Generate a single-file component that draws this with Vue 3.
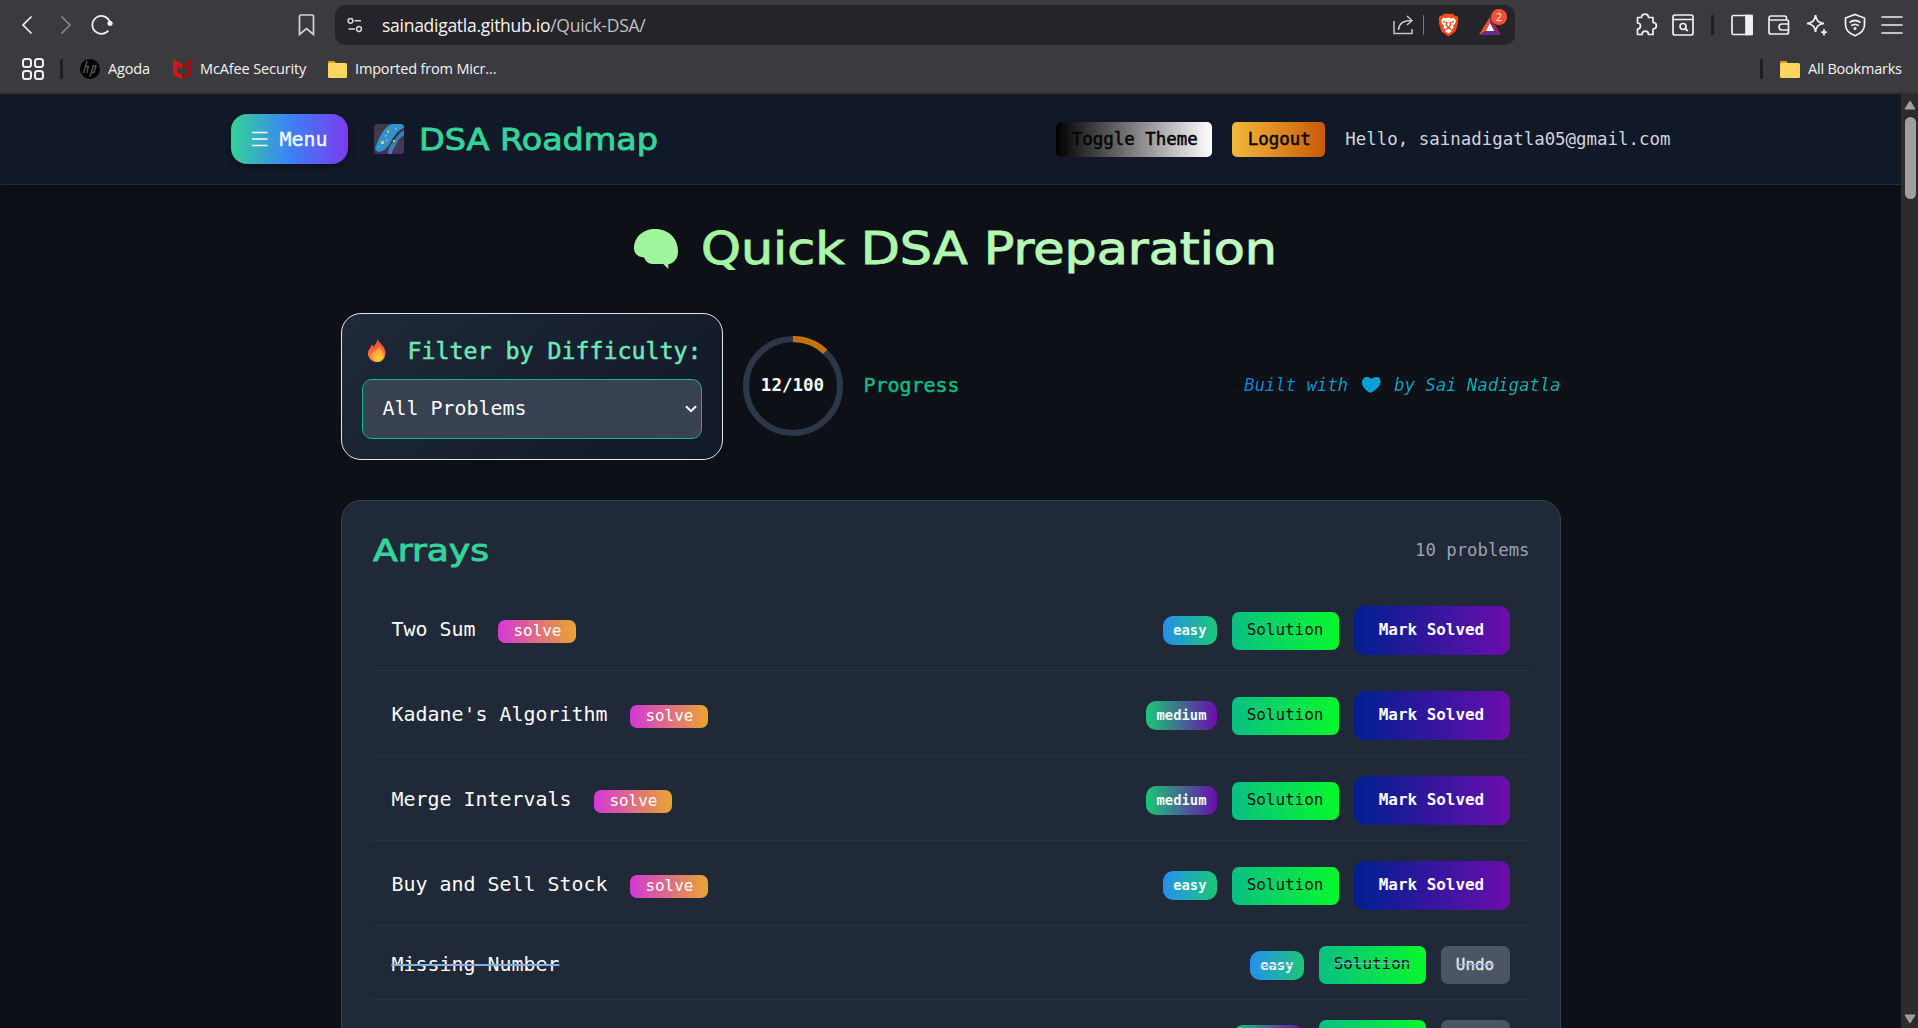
<script setup>
const problems = [
  { name: 'Two Sum', level: 'easy', solved: false },
  { name: "Kadane's Algorithm", level: 'medium', solved: false },
  { name: 'Merge Intervals', level: 'medium', solved: false },
  { name: 'Buy and Sell Stock', level: 'easy', solved: false },
  { name: 'Missing Number', level: 'easy', solved: true },
  { name: '', level: 'medium', solved: true },
]
const done = 12
const total = 100
</script>

<template>
  <div class="window">
    <div class="chrome">
      <div class="toolbar">
        <svg class="ic back" width="12" height="20" viewBox="0 0 12 20"><path d="M10.500 1.500 2 10l8.500 8.500" /></svg>
        <svg class="ic fwd" width="12" height="20" viewBox="0 0 12 20"><path d="M1.500 1.500 10 10l-8.500 8.500" /></svg>
        <svg class="ic reload" width="24" height="24" viewBox="0 0 24 24"><path d="M18.300 17.600A9 9 0 1 1 19 7.200c.8 1 1.200 1.800 1.400 2.800" /><circle cx="20" cy="10.300" r="2.600" fill="#f0f0f2" stroke="none" /></svg>
        <svg class="ic mark" width="17" height="22" viewBox="0 0 17 22"><path d="M1.500 2.500a1.500 1.500 0 0 1 1.500-1.500h11a1.500 1.500 0 0 1 1.500 1.500v18l-7-6-7 6z" /></svg>
        <div class="address">
          <svg class="ic tune" width="16" height="16" viewBox="0 0 16 16"><circle cx="3.500" cy="3.800" r="2.400" /><path d="M7.500 3.800H14M1.500 12h6.500" /><circle cx="12" cy="12" r="2.400" /></svg>
          <span class="url">sainadigatla.github.io<i>/Quick-DSA/</i></span>
          <svg class="ic share" width="21" height="20" viewBox="0 0 21 20"><path d="M1 6v12.500h18V14M5.500 15c.3-6 4-9.500 12.500-9.500M14 1l5 4.500-5 4.500" /></svg>
          <span class="bar"></span>
          <svg class="lion" width="21" height="24" viewBox="0 0 21 24">
            <path fill="#ff4a12" d="M6 .8h9l1.800 2 2.200-.1 1.500 3-.8 2 .4 2.500-2.600 8.300L10.500 23.500 3.500 18.500.9 10.200l.4-2.500-.8-2 1.500-3 2.200.1z" />
            <path fill="#fff" d="M5 4.800 8 5.200l2.500-.6 2.500.6 3-.4 2 3-.7 2.200-2.300 2.700.7 2.200-3 2.200 1.200 1.200-3.400 2.200-3.400-2.200 1.200-1.200-3-2.200.7-2.200-2.300-2.700L3 7.800z" />
            <path fill="none" stroke="#ff4a12" stroke-width="1.300" d="m5 8.500 4 1.200-.8 2.300 2.300 3 2.300-3-.8-2.300 4-1.200M8 16.200l2.500-1.200 2.500 1.200" />
          </svg>
          <span class="bat">
            <svg width="24" height="20" viewBox="0 0 24 20"><path fill="#ff5020" d="M12 1 .8 19l7-4L12 7z" /><path fill="#a01f63" d="m12 1 11.200 18-7-4L12 7z" /><path fill="#662d91" d="M.8 19h22.400l-7-4H7.800z" /><path fill="#fff" d="m12 7-4.200 8h8.400z" /></svg>
            <b>2</b>
          </span>
        </div>
        <div class="tools">
          <svg class="ic puzzle" width="24" height="24" viewBox="0 0 24 24"><path d="M3.500 4.500h4c0-4.500 7-4.500 7 0h4.500v5c4.500 0 4.500 6.500 0 6.500v5.500h-4.500c0-4.500-6.500-4.500-6.500 0H3.500V16c4 0 4-6 0-6z" stroke-linejoin="round" /></svg>
          <svg class="ic" width="22" height="22" viewBox="0 0 22 22"><rect x="1" y="1" width="20" height="20" rx="2" /><path d="M1 5.500h20M13 14.500l3 2.500" /><circle cx="11" cy="12.500" r="3" /></svg>
          <span class="bar dark"></span>
          <svg class="ic" width="22" height="22" viewBox="0 0 22 22"><rect x="1" y="1.500" width="20" height="19" rx="1.500" /><path d="M15 1.500h6v19h-6z" fill="#f0f0f2" /></svg>
          <svg class="ic" width="22" height="22" viewBox="0 0 22 22"><path d="M18.500 6.500V4a2 2 0 0 0-2-2H3a2 2 0 0 0-2 2v14a2 2 0 0 0 2 2h15.500a2 2 0 0 0 2-2V7.500a1.500 1.500 0 0 0-1.500-1.500H2M20.500 10H14a3 3 0 0 0 0 6h6.500" /></svg>
          <svg class="ic" width="24" height="24" viewBox="0 0 24 24"><path d="M10.500 2c.8 5.700 2.800 7.700 8.500 8.500-5.700.8-7.700 2.800-8.500 8.500-.8-5.700-2.800-7.700-8.500-8.500 5.700-.8 7.700-2.800 8.500-8.500z" /><path d="M19 16c.3 2.200 1 2.800 3 3.200-2 .4-2.700 1-3 3.200-.3-2.200-1-2.800-3-3.200 2-.4 2.700-1 3-3.200z" fill="#f0f0f2" stroke-width="1" /></svg>
          <svg class="ic" width="22" height="24" viewBox="0 0 22 24"><path d="M11 1.500 20.500 5v7c0 5-4 8.500-9.500 10.800C5.500 20.500 1.500 17 1.500 12V5z" /><path d="M5.500 9.700c3.500-2.800 7.500-2.800 11 0M7.300 12.700c2.500-1.900 4.900-1.900 7.400 0" /><circle cx="11" cy="15.500" r="1.500" fill="#f0f0f2" stroke="none" /></svg>
          <svg class="ic" width="22" height="20" viewBox="0 0 22 20"><path d="M.5 2h21M.5 10h21M.5 18h21" /></svg>
        </div>
      </div>
      <div class="bookmarks">
        <svg class="ic" width="22" height="22" viewBox="0 0 22 22"><rect x="1" y="1" width="8" height="8" rx="2.500" /><rect x="13" y="1" width="8" height="8" rx="2.500" /><rect x="1" y="13" width="8" height="8" rx="2.500" /><rect x="13" y="13" width="8" height="8" rx="2.500" /></svg>
        <span class="bar dark first"></span>
        <svg class="hp" width="20" height="20" viewBox="0 0 20 20"><circle cx="10" cy="10" r="10" fill="#000" /><path d="M7 2 3.500 14M5.500 7.500h3L6.700 14M13.500 6.500 9.700 18M12.500 7h3.500l-2 6.500h-2.500" fill="none" stroke="#55555a" stroke-width="1.300" /></svg>
        <span class="t t1">Agoda</span>
        <svg class="mc" width="18" height="20" viewBox="0 0 18 20"><path fill="#d01818" d="m0 0 9 5v4.500L4.500 7.300v6.500L9 15.700V20l-9-4z" /><path fill="#8e1515" d="m18 0-9 5v4.500l4.500-2.200v6.500L9 15.700V20l9-4z" /></svg>
        <span class="t t2">McAfee Security</span>
        <svg class="fd" width="20" height="17" viewBox="0 0 20 17"><path fill="#dba015" d="M0 1.500C0 .7.500 0 1.300 0h5l2 2.500H18V12H0z" /><rect y="2" width="19" height="15" rx="1.500" fill="#ffd75e" /></svg>
        <span class="t t3">Imported from Micr...</span>
        <span class="bar dark last"></span>
        <svg class="fd2" width="20" height="17" viewBox="0 0 20 17"><path fill="#dba015" d="M0 1.500C0 .7.500 0 1.300 0h5l2 2.500H18V12H0z" /><rect y="2" width="20" height="15" rx="1.500" fill="#ffd75e" /></svg>
        <span class="t t4">All Bookmarks</span>
      </div>
    </div>

    <div class="viewport">
      <div class="page">
        <header>
          <div class="header-inner">
            <button class="menu">
              <svg width="16" height="16" viewBox="0 0 16 16"><path d="M0 1.500h15.500M0 8h15.500M0 14.500h15.500" stroke="#fff" stroke-width="1.500" /></svg>
              <span>Menu</span>
            </button>
            <svg class="galaxy" width="30" height="30" viewBox="0 0 30 30">
              <defs>
                <clipPath id="sq"><rect width="30" height="30" rx="3.500" /></clipPath>
                <linearGradient id="sky" x1="0" y1="0" x2="0" y2="1"><stop offset="0" stop-color="#403840" /><stop offset=".75" stop-color="#433b4c" /><stop offset="1" stop-color="#502a70" /></linearGradient>
              </defs>
              <g clip-path="url(#sq)">
                <rect width="30" height="30" fill="url(#sky)" />
                <path fill="#3293cc" d="M17 0h13v4c-7 3-10 9-14 15-3 5-7 9-12 9L1 25c3-9 7-20 16-25z" />
                <path fill="#3482bb" d="M30 6v5c-5 3-6 6-8 10-2 3-4 5-4 9h-4c0-5 2-9 5-12 4-5 6-9 11-12z" />
                <path fill="none" stroke="#28394f" stroke-width="1.300" d="M30 4.500c-7 3-9 8-12 13" />
                <path fill="#f4c535" d="M13 6.500h2v2h-2zM7 17h3v3H7zM19 16h2v2h-2z" />
                <path fill="#68d6ee" d="M21 4h1.500v1.500H21zM11 11h1.500v1.500H11zM12 15.500h1.500V17H12zM4 22h1v1H4z" />
                <path fill="#39529a" d="M3 8.500h1.500V10H3zM6 3h1v1H6zM25 18h1v1h-1zM27 22h1v1h-1zM22 25h1v1h-1z" />
              </g>
            </svg>
            <svg class="brand" width="240" height="40"><text x="0" y="31" textLength="239" lengthAdjust="spacingAndGlyphs">DSA Roadmap</text></svg>
            <button class="toggle">Toggle Theme</button>
            <button class="logout">Logout</button>
            <span class="hello">Hello, sainadigatla05@gmail.com</span>
          </div>
        </header>

        <main>
          <svg class="headline" width="646" height="60" viewBox="0 0 646 60">
            <defs><linearGradient id="mint" gradientUnits="userSpaceOnUse" x1="0" y1="0" x2="642" y2="0"><stop offset="0" stop-color="#a0f49d" /><stop offset="1" stop-color="#c2fbc4" /></linearGradient></defs>
            <path fill="url(#mint)" d="M21 5C35 5 44 15 44 27c0 6-2 10-7 12.500l-2.700.7V45l-5-5H19c-4 0-7-2-9-6.500C4 33 0 29.500 0 24.500 0 13 9 5 21 5z" />
            <text x="67" y="40" textLength="576" lengthAdjust="spacingAndGlyphs" fill="url(#mint)">Quick DSA Preparation</text>
          </svg>

          <section class="controls">
            <div class="filter">
              <label>
                <svg width="18" height="23" viewBox="0 0 18 23">
                  <defs>
                    <linearGradient id="fl" x1="0" y1="0" x2="0" y2="1"><stop offset="0" stop-color="#f0453c" /><stop offset="1" stop-color="#ff8a3c" /></linearGradient>
                    <radialGradient id="fy" cx=".6" cy=".75" r=".6"><stop offset="0" stop-color="#ffd52e" /><stop offset="1" stop-color="#ff9640" /></radialGradient>
                  </defs>
                  <path fill="url(#fl)" d="M9.500 0c1.500 4 8 7 8 14 0 5-3.500 9-8.500 9S0 19 0 14.500C0 10 3 9.500 3.500 5.500c1 .5 1.500 1 2 2.200C7.500 5.500 9 3 9.500 0z" />
                  <path fill="url(#fy)" d="M11 7c1 3 4.800 5 4.800 9.500 0 4-2.800 6.500-6.300 6.500-4 0-6.300-2.800-6.300-6C3.200 12.500 9 12 11 7z" />
                </svg>
                <span>Filter by Difficulty:</span>
              </label>
              <div class="select">
                <span>All Problems</span>
                <svg width="12" height="8" viewBox="0 0 12 8"><path d="m1 1.200 5 5 5-5" fill="none" stroke="#fff" stroke-width="2" /></svg>
              </div>
            </div>
            <div class="ring">
              <svg width="100" height="100" viewBox="0 0 100 100">
                <circle cx="50" cy="50" r="47" pathLength="100" stroke="#2d3748" />
                <circle cx="50" cy="50" r="47" pathLength="100" stroke="#c67304" :stroke-dasharray="`${done} ${total - done}`" />
              </svg>
              <b>{{ done }}/{{ total }}</b>
            </div>
            <span class="progress">Progress</span>
            <div class="credit">
              <span class="c1">Built with</span>
              <svg width="19" height="16" viewBox="0 0 19 16"><path fill="#009fd4" d="M7.500 15.500C4 13.500 0 10 0 5.500 0 2 2.500 0 5 0c2 0 3.500 1 4.500 2C11 .7 12.500 0 14.500 0 17 0 18.600 1.500 18.600 4.500c0 5-6 9-8.600 10.700-.8.500-1.700.7-2.500.3z" /></svg>
              <span class="c2">by Sai Nadigatla</span>
            </div>
          </section>

          <section class="card">
            <div class="card-head">
              <svg class="topic" width="118" height="40"><text x="0" y="28" textLength="116" lengthAdjust="spacingAndGlyphs">Arrays</text></svg>
              <span>10 problems</span>
            </div>
            <div v-for="(p, i) in problems" :key="i" class="row" :class="{ solved: p.solved }">
              <span class="name">{{ p.name }}</span>
              <a v-if="!p.solved" class="solve">solve</a>
              <span class="level" :class="p.level">{{ p.level }}</span>
              <a class="solution">Solution</a>
              <button v-if="p.solved" class="undo">Undo</button>
              <button v-else class="mark-solved">Mark Solved</button>
            </div>
          </section>
        </main>
      </div>
      <div class="scrollbar">
        <svg width="12" height="10" viewBox="0 0 12 10"><path d="M6 1 11 9H1z" fill="#9f9f9f" stroke="#9f9f9f" stroke-linejoin="round" /></svg>
        <div class="thumb"></div>
        <svg class="down" width="12" height="10" viewBox="0 0 12 10"><path d="M6 9 11 1H1z" fill="#9f9f9f" stroke="#9f9f9f" stroke-linejoin="round" /></svg>
      </div>
    </div>
  </div>
</template>

<style>
body { margin: 0; background: #0d1117; overflow: hidden; }
</style>

<style scoped>
* { box-sizing: border-box; }
svg { display: block; flex: none; overflow: visible; }
button { border: 0; margin: 0; padding: 0; font: inherit; }
.window { width: 1918px; height: 1028px; display: flex; flex-direction: column; overflow: hidden; }

.chrome { height: 94px; flex: none; background: #3b3a3e; border-bottom: 2px solid #333236; font-family: "Open Sans", "Noto Sans", sans-serif; color: #f4f4f6; }
.ic { fill: none; stroke: #f0f0f2; stroke-width: 1.7; }
.toolbar { height: 50px; display: flex; align-items: center; padding-left: 21px; }
.fwd { margin-left: 27px; stroke: #85848a; }
.reload { margin-left: 18px; }
.mark { margin-left: 184px; stroke: #d6d5da; }
.address { width: 1180px; height: 40px; margin-left: 20px; border-radius: 10px; background: #252428; display: flex; align-items: center; padding: 0 13px 0 12px; }
.tune { stroke: #d6d5da; stroke-width: 1.5; }
.url { margin-left: 19px; font-size: 17.500px; letter-spacing: -0.270px; white-space: nowrap; line-height: 38px; }
.url i { font-style: normal; color: #c0bfc5; }
.share { margin-left: auto; stroke: #c6c5ca; stroke-width: 1.500; }
.bar { width: 2px; height: 20px; background: #77767b; border-radius: 1px; }
.address .bar { width: 1px; margin-left: 9px; }
.lion { margin-left: 14px; }
.bat { margin-left: 19px; position: relative; }
.bat svg { margin-top: 2px; }
.bat b { position: absolute; left: 13px; top: -5px; width: 16px; height: 16px; border-radius: 50%; background: #ff5030; font: 11px/16px "Open Sans", sans-serif; text-align: center; }
.tools { margin-left: auto; display: flex; align-items: center; gap: 15px; padding-right: 15px; }
.puzzle { margin-right: -1px; }
.tools .bar { margin: 0 2px; }
.bar.dark { background: #1f1f22; width: 3px; }
.bookmarks { height: 38px; display: flex; align-items: center; padding: 0 16px 0 22px; font-size: 14.500px; }
.bookmarks svg { stroke-width: 2; }
.first { margin: 0 17px 0 16px; }
.t { white-space: nowrap; line-height: 20px; }
.t1 { margin-left: 8px; width: 44px; letter-spacing: -0.150px; }
.mc { margin-left: 21px; }
.t2 { margin-left: 9px; width: 108px; letter-spacing: -0.120px; }
.fd { margin-left: 20px; }
.t3 { margin-left: 7px; letter-spacing: -0.160px; }
.last { margin-left: auto; }
.fd2 { margin-left: 17px; }
.t4 { margin-left: 8px; width: 94px; letter-spacing: -0.220px; }

.viewport { flex: 1; display: flex; min-height: 0; }
.page { flex: 1; background: #0d1117; overflow: hidden; font-family: "DejaVu Sans Mono", "Liberation Mono", monospace; color: #fff; }
.scrollbar { width: 17px; background: #2c2c2c; display: flex; flex-direction: column; align-items: center; padding: 6px 0 4px 1px; }
.thumb { width: 11px; height: 82px; margin-top: 7px; border-radius: 6px; background: #9f9f9f; }
.down { margin-top: auto; }

header { height: 91px; background: #111827; border-bottom: 1px solid #1f2937; box-shadow: 0 4px 8px rgba(0, 0, 0, .25); }
.header-inner { width: 1440px; height: 90px; margin: 0 auto; display: flex; align-items: center; }
.menu { width: 117px; height: 50px; border-radius: 16px; background: linear-gradient(90deg, #34d399, #3b82f6 50%, #7c3aed); box-shadow: 0 3px 6px rgba(0, 0, 0, .3); display: flex; align-items: center; padding: 0 0 0 21px; color: #f3f6ff; font-size: 19.930px; }
.menu span { margin-left: 12px; -webkit-text-stroke: .4px #f3f6ff; }
.galaxy { margin-left: 26px; }
.brand { margin-left: 15px; }
.brand text, .topic text { font: 500 30px "DejaVu Sans", sans-serif; fill: #34d399; stroke: #34d399; stroke-width: .9px; }
.toggle, .logout { height: 35px; border-radius: 5px; color: #050505; font-size: 17.450px; padding: 0 0 0 1px; -webkit-text-stroke: .5px #050505; }
.toggle { width: 156px; margin-left: auto; background: linear-gradient(90deg, #000, #fff); }
.logout { width: 93px; margin-left: 20px; background: linear-gradient(90deg, #f2b93b, #c85a08); }
.hello { margin-left: 20px; font-size: 17.430px; color: #d1d5db; line-height: 24px; white-space: nowrap; }

main { width: 1220px; margin: 0 auto; }
.headline { margin: 39px 0 0 293px; }
.headline text { font: 45px "DejaVu Sans", sans-serif; stroke: url(#mint); stroke-width: 1px; }
.controls { display: flex; align-items: center; margin-top: 29px; }
.filter { width: 382px; height: 147px; border: 1px solid #e5e7eb; border-radius: 20px; background: linear-gradient(135deg, #1f2937, #111827); padding: 23px 20px 0; }
label { display: flex; align-items: center; height: 27px; padding-left: 6px; color: #6ee7b7; font-size: 23.250px; }
label span { margin-left: 22px; white-space: nowrap; -webkit-text-stroke: .5px #6ee7b7; }
.select { width: 340px; height: 60px; margin-top: 15px; border: 1px solid #10b981; border-radius: 10px; background: #374151; display: flex; align-items: center; justify-content: space-between; padding: 0 4px 1px 20px; font-size: 19.930px; }
.ring { position: relative; width: 100px; height: 100px; margin: 0 0 1px 20px; }
.ring circle { fill: none; stroke-width: 6; transform: rotate(-90deg); transform-origin: center; }
.ring b { position: absolute; inset: 0; text-align: center; line-height: 99px; font-size: 17.530px; }
.progress { margin-left: 21px; font-size: 19.930px; line-height: 24px; padding-bottom: 1px; color: #10b981; -webkit-text-stroke: .5px #10b981; }
.credit { margin-left: auto; display: flex; align-items: center; font-size: 17.300px; font-style: italic; padding-bottom: 4px; }
.credit span { background: linear-gradient(90deg, #0a84dc, #009bd6); -webkit-background-clip: text; background-clip: text; color: transparent; white-space: nowrap; line-height: 24px; }
.credit .c2 { background-image: linear-gradient(90deg, #00a0cf, #0fb5a5); }
.credit svg { margin: 0 13px 0 14px; }

.card { height: 700px; margin-top: 40px; border: 1px solid #374151; border-radius: 20px; background: #1f2937; padding: 32px 30px 0; }
.card-head { height: 53px; display: flex; justify-content: space-between; padding-left: 1px; }
.card-head span { font-size: 17.300px; line-height: 34px; color: #9ca3af; }
.row { display: flex; align-items: center; padding: 20px 20px 15px; border-bottom: 1px solid #2a3443; }
.name { font-size: 19.930px; line-height: 28px; padding-bottom: 1px; white-space: nowrap; }
.solve { width: 78px; height: 23px; margin: 2px 0 0 23px; border-radius: 7px; background: linear-gradient(90deg, #d438d6, #e8a530); text-align: center; font-size: 15.930px; line-height: 22px; }
.level { margin-left: auto; height: 29px; padding: 0 10px; border-radius: 10px; font-size: 13.850px; font-weight: 700; line-height: 28px; color: #f3fff8; }
.easy { background: linear-gradient(90deg, #258fee, #1cc775); }
.medium { background: linear-gradient(90deg, #1cc775, #6a0dad); }
.solution { width: 107px; height: 38px; margin-left: 15px; border-radius: 7px; background: linear-gradient(90deg, #0abf83, #05f82c); color: #0d1117; font-size: 15.930px; line-height: 36px; text-align: center; }
.mark-solved { width: 156px; height: 49px; margin-left: 15px; border-radius: 10px; background: linear-gradient(90deg, #001f8f, #6a0dad); color: #fff; font-size: 15.930px; font-weight: 700; padding-bottom: 3px; }
.undo { width: 69px; height: 38px; margin-left: 15px; border-radius: 7px; background: #4b5563; color: #e5e7eb; font-size: 15.930px; padding-bottom: 2px; -webkit-text-stroke: .3px #e5e7eb; }
.solved .name, .solved .level, .solved .solution, .solved .undo { text-decoration: line-through #84a9f0; }
.solved .name { text-decoration-thickness: 2px; }
</style>
